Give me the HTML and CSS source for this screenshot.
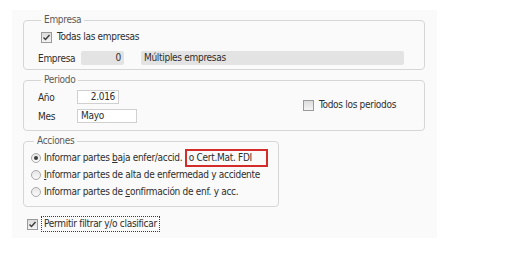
FILE: index.html
```html
<!DOCTYPE html>
<html>

<head>
	<meta charset="UTF-8">
	<title>Partes de baja</title>
	<link rel="stylesheet" href="styles.css">
</head>

<body>
	<div class="panel">
		<fieldset class="group group-empresa">
			<legend>Empresa</legend>
			<label class="check-row todas">
				<span class="check checked"><svg width="9" height="9" viewBox="0 0 9 9"><path d="M1.5 4.5 L3.5 6.5 L7.5 2" fill="none" stroke="#3a3a3a" stroke-width="1.4"/></svg></span>
				<span>Todas las empresas</span>
			</label>
			<div class="field-row">
				<span class="field-label">Empresa</span>
				<span class="box box-code">0</span>
				<span class="box box-name">Múltiples empresas</span>
			</div>
		</fieldset>

		<fieldset class="group group-periodo">
			<legend>Periodo</legend>
			<div class="periodo-body">
				<div class="periodo-fields">
					<div class="field-row">
						<span class="field-label short">Año</span>
						<span class="input input-year">2.016</span>
					</div>
					<div class="field-row">
						<span class="field-label short">Mes</span>
						<span class="input input-month">Mayo</span>
					</div>
				</div>
				<label class="check-row todos">
					<span class="check"></span>
					<span>Todos los periodos</span>
				</label>
			</div>
		</fieldset>

		<fieldset class="group group-acciones">
			<legend>Acciones</legend>
			<label class="radio-row">
				<span class="radio selected"></span>
				<span>Informar partes <u>b</u>aja enfer/accid. <span class="highlight">o Cert.Mat. FDI</span></span>
			</label>
			<label class="radio-row">
				<span class="radio"></span>
				<span><u>I</u>nformar partes de alta de enfermedad y accidente</span>
			</label>
			<label class="radio-row">
				<span class="radio"></span>
				<span>Informar partes de <u>c</u>onfirmación de enf. y acc.</span>
			</label>
		</fieldset>

		<label class="check-row permitir">
			<span class="check checked"><svg width="9" height="9" viewBox="0 0 9 9"><path d="M1.5 4.5 L3.5 6.5 L7.5 2" fill="none" stroke="#3a3a3a" stroke-width="1.4"/></svg></span>
			<span class="focus">Permitir filtrar y/o clasificar</span>
		</label>
	</div>
</body>

</html>
```

FILE: styles.css
```css
body {
	margin: 0;
	background: #ffffff;
	font-family: "DejaVu Sans Condensed", "DejaVu Sans", sans-serif;
	font-stretch: condensed;
	font-size: 10px;
	letter-spacing: -0.3px;
	color: #2e2e2e;
	white-space: nowrap;
}

.panel {
	margin: 10px 0 0 12px;
	width: 425px;
	height: 228px;
	box-sizing: border-box;
	padding: 4px 0 0 11px;
	background: #fafafa;
}

/* grupos */
.group {
	margin: 0;
	border: 1px solid #d6d6d6;
	border-radius: 4px;
	box-sizing: border-box;
	min-width: 0;
}

.group legend {
	padding: 0 3px;
	margin-left: 3px;
	line-height: 12px;
	color: #5a5a5a;
}

.group-empresa {
	width: 402px;
	padding: 5px 20px 4px 14px;
}

.group-periodo {
	width: 402px;
	margin-top: 4px;
	padding: 4px 20px 7px 14px;
}

.group-acciones {
	width: 256px;
	margin-top: 4px;
	padding: 2px 6px 6px 7px;
}

/* filas */
.check-row {
	display: flex;
	align-items: center;
	gap: 5px;
	line-height: 12px;
}

.todas {
	margin-left: 3px;
}

.field-row {
	display: flex;
	align-items: center;
	height: 14px;
}

.group-empresa .field-row {
	margin-top: 8px;
}

.field-label {
	width: 43px;
}

.field-label.short {
	width: 39px;
}

.box {
	height: 14px;
	line-height: 14px;
	background: #e3e3e3;
	border-radius: 2px;
	box-sizing: border-box;
	padding: 0 3px;
}

.box-code {
	width: 43px;
	text-align: right;
	margin-right: 17px;
}

.box-name {
	width: 263px;
}

.input {
	height: 14px;
	line-height: 12px;
	background: #ffffff;
	border: 1px solid #d0d0d0;
	box-sizing: border-box;
	padding: 0 3px;
}

.input-year {
	width: 42px;
	text-align: right;
}

.input-month {
	width: 60px;
}

.periodo-body {
	display: flex;
	align-items: center;
}

.periodo-fields {
	width: 265px;
	display: flex;
	flex-direction: column;
	gap: 5px;
}

.todos {
	margin-bottom: 3px;
}

/* controles */
.check {
	width: 11px;
	height: 11px;
	box-sizing: border-box;
	border: 1px solid #9a9a9a;
	background: linear-gradient(#dcdcdc, #f4f4f4);
	display: flex;
	align-items: center;
	justify-content: center;
	flex: none;
}

.radio-row {
	display: flex;
	align-items: center;
	height: 17px;
}

.radio {
	width: 10px;
	height: 10px;
	box-sizing: border-box;
	border: 1px solid #a8a8a8;
	border-radius: 50%;
	background: linear-gradient(#e6e6e6, #fafafa);
	margin-right: 3px;
	flex: none;
	display: flex;
	align-items: center;
	justify-content: center;
}

.radio.selected::after {
	content: "";
	width: 4px;
	height: 4px;
	border-radius: 50%;
	background: #3c3c3c;
}

.highlight {
	display: inline-block;
	border: 2px solid #d42b2b;
	line-height: 14px;
	padding: 0 14px 0 2px;
	margin-left: 0;
}

.permitir {
	margin: 9px 0 0 4px;
	gap: 3px;
	line-height: 14px;
}

.focus {
	border: 1px dotted #3a3a3a;
	padding: 0 2px;
}
```
